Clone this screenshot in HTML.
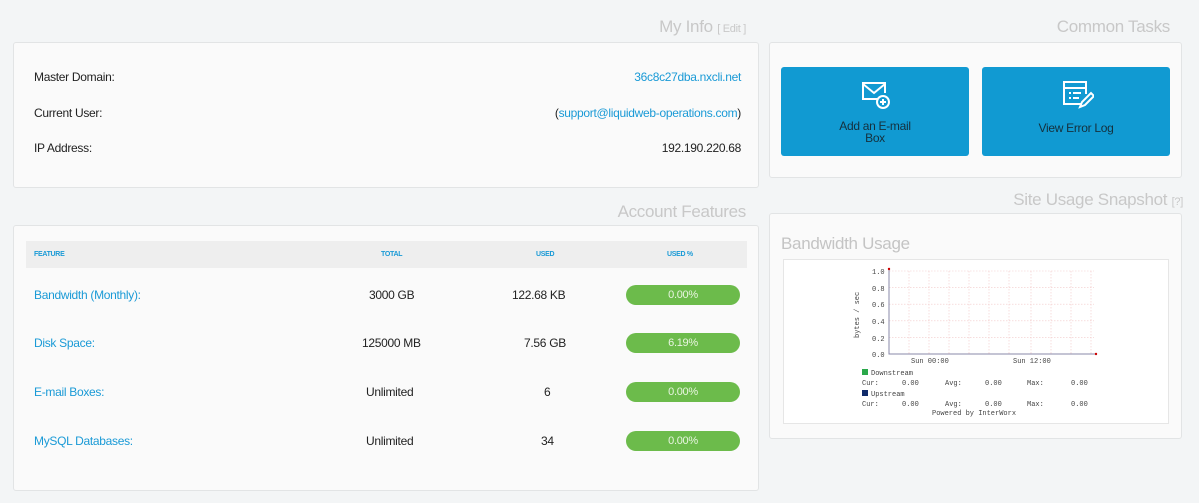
<!DOCTYPE html>
<html><head><meta charset="utf-8"><style>
*{box-sizing:border-box;margin:0;padding:0}
body{width:1199px;height:503px;background:#f3f5f6;font-family:"Liberation Sans",sans-serif;font-size:12px;color:#222;position:relative;overflow:hidden;letter-spacing:-0.3px}
.abs{position:absolute}
.title{position:absolute;color:#c8c8c8;font-size:17px;text-align:right;font-family:"Liberation Sans",sans-serif;letter-spacing:-0.3px}
.title small{font-size:11px}
.panel{position:absolute;background:#fafafa;border:1px solid #e2e4e5;border-radius:3px}
.lbl{position:absolute;left:20px}
.val{position:absolute;right:17px}
a{color:#1a9ad6;text-decoration:none}
.th{position:absolute;top:0;font-size:7px;font-weight:bold;color:#1a9ad6;line-height:27px;font-family:"Liberation Sans",sans-serif}
.row{position:absolute;left:0;width:100%;height:20px;line-height:20px}
.pill{position:absolute;left:612px;width:114px;height:20px;border-radius:10px;background:#6cbb4b;color:#e8f5e0;text-align:center;font-size:11px;line-height:20px}
.btn{position:absolute;top:24px;width:188px;height:89px;background:#119ad2;border-radius:3px;text-align:center;color:#15303d;font-size:12px;font-family:"Liberation Sans",sans-serif;line-height:12px}
svg text{white-space:pre}
</style></head><body>
<div class="title" style="right:453px;top:17px">My Info <small>[ Edit ]</small></div>
<div class="panel" style="left:13px;top:42px;width:746px;height:146px">
 <div class="lbl" style="top:27px">Master Domain:</div><div class="val" style="top:27px"><a>36c8c27dba.nxcli.net</a></div>
 <div class="lbl" style="top:63px">Current User:</div><div class="val" style="top:63px">(<a>support@liquidweb-operations.com</a>)</div>
 <div class="lbl" style="top:98px">IP Address:</div><div class="val" style="top:98px">192.190.220.68</div>
</div>
<div class="title" style="right:453px;top:202px">Account Features</div>
<div class="panel" style="left:13px;top:225px;width:746px;height:266px">
 <div class="abs" style="left:12px;top:15px;width:721px;height:27px;background:#eeeeee">
  <div class="th" style="left:8px">FEATURE</div>
  <div class="th" style="left:355px">TOTAL</div>
  <div class="th" style="left:510px">USED</div>
  <div class="th" style="left:641px">USED %</div>
 </div>
 <div class="row" style="top:59px"><a class="abs" style="left:20px">Bandwidth (Monthly):</a><span class="abs" style="left:355px">3000 GB</span><span class="abs" style="left:498px">122.68 KB</span><div class="pill">0.00%</div></div>
 <div class="row" style="top:107px"><a class="abs" style="left:20px">Disk Space:</a><span class="abs" style="left:348px">125000 MB</span><span class="abs" style="left:510px">7.56 GB</span><div class="pill">6.19%</div></div>
 <div class="row" style="top:156px"><a class="abs" style="left:20px">E-mail Boxes:</a><span class="abs" style="left:352px">Unlimited</span><span class="abs" style="left:530px">6</span><div class="pill">0.00%</div></div>
 <div class="row" style="top:205px"><a class="abs" style="left:20px">MySQL Databases:</a><span class="abs" style="left:352px">Unlimited</span><span class="abs" style="left:527px">34</span><div class="pill">0.00%</div></div>
</div>
<div class="title" style="right:29px;top:17px">Common Tasks</div>
<div class="panel" style="left:769px;top:42px;width:413px;height:136px">
 <div class="btn" style="left:11px">
  <svg class="abs" style="left:79px;top:12px" width="32" height="32" viewBox="0 0 32 32" fill="none" stroke="#fff" stroke-width="2"><path d="M21 20H3V4h22v10"/><path d="M3 5l11 9 11-9"/><circle cx="23" cy="23" r="6" fill="#119ad2"/><path d="M23 20v6M20 23h6"/></svg>
  <div style="margin-top:53px">Add an E-mail<br>Box</div>
 </div>
 <div class="btn" style="left:212px">
  <svg class="abs" style="left:78px;top:11px" width="34" height="34" viewBox="0 0 34 34" fill="none" stroke="#fff" stroke-width="2"><path d="M22 26H4V4h22v12"/><path d="M4 10h22"/><path d="M9 15h2M13 15h8M9 20h2M13 20h6"/><path d="M20 29l2-5 9-9 3 3-9 9z"/></svg>
  <div style="margin-top:55px">View Error Log</div>
 </div>
</div>
<div class="title" style="right:16px;top:190px">Site Usage Snapshot <small>[?]</small></div>
<div class="panel" style="left:769px;top:213px;width:413px;height:226px">
 <div class="abs" style="left:11px;top:20px;color:#c4c4c4;font-size:17px;font-family:'Liberation Sans',sans-serif">Bandwidth Usage</div>
 <div class="abs" style="left:13px;top:45px;width:386px;height:165px;background:#fff;border:1px solid #e6e6e6">
 <svg width="386" height="165" style="font-family:'Liberation Mono',monospace;font-size:7px;letter-spacing:0" fill="#444">
  <g stroke="#f2c9c9" stroke-width="0.6" stroke-dasharray="1.5 1.5">
   <path d="M105 11H310M105 27.6H310M105 44.2H310M105 60.8H310M105 77.4H310"/>
   <path d="M125 11V94M145 11V94M165 11V94M185 11V94M205 11V94M225 11V94M247 11V94M267 11V94M287 11V94M307 11V94"/>
  </g>
  <path d="M105 9V94H312" stroke="#8888aa" stroke-width="1" fill="none"/>
  <circle cx="105" cy="9" r="1.2" fill="#c00"/><circle cx="312" cy="94" r="1.2" fill="#c00"/>
  <text x="88" y="14">1.0</text><text x="88" y="31">0.8</text><text x="88" y="47">0.6</text><text x="88" y="64">0.4</text><text x="88" y="81">0.2</text><text x="88" y="97">0.0</text>
  <text transform="translate(75 78) rotate(-90)">bytes / sec</text>
  <text x="127" y="103">Sun 00:00</text><text x="229" y="103">Sun 12:00</text>
  <rect x="78" y="109" width="6" height="6" fill="#2aa84a"/><text x="87" y="115">Downstream</text>
  <text x="78" y="125">Cur:</text><text x="118" y="125">0.00</text><text x="161" y="125">Avg:</text><text x="201" y="125">0.00</text><text x="243" y="125">Max:</text><text x="287" y="125">0.00</text>
  <rect x="78" y="130" width="6" height="6" fill="#102a6a"/><text x="87" y="136">Upstream</text>
  <text x="78" y="146">Cur:</text><text x="118" y="146">0.00</text><text x="161" y="146">Avg:</text><text x="201" y="146">0.00</text><text x="243" y="146">Max:</text><text x="287" y="146">0.00</text>
  <text x="148" y="155">Powered by InterWorx</text>
 </svg>
 </div>
</div>
</body></html>
